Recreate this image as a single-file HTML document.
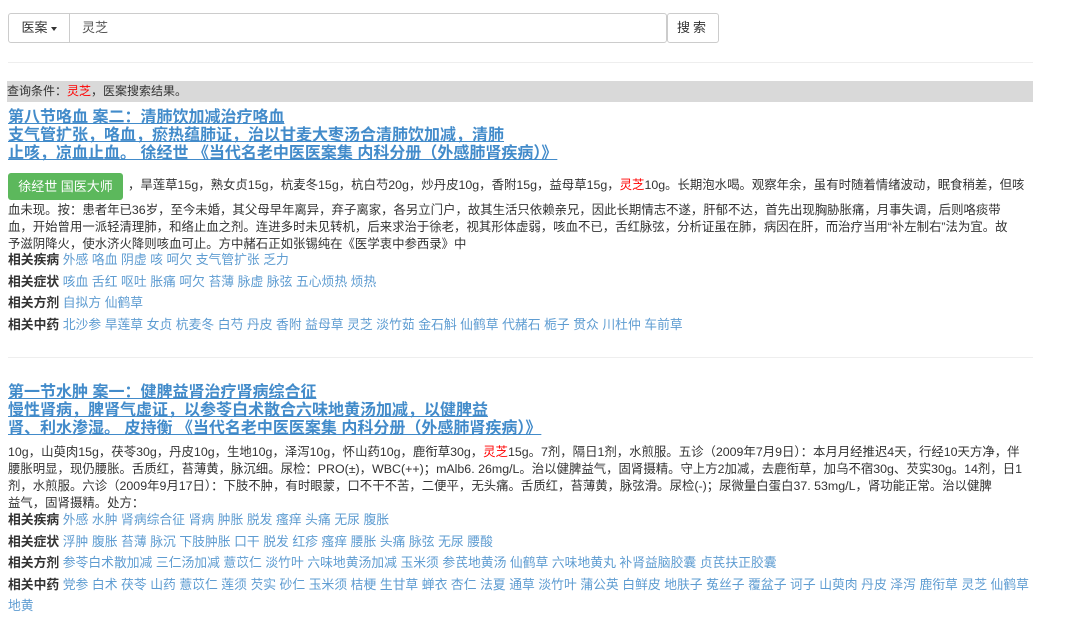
<!DOCTYPE html>
<html><head><meta charset="utf-8"><style>
body{margin:0;background:#fff;font-family:"Liberation Sans","Noto Sans CJK SC",sans-serif;color:#333;font-size:12px}
.sg{position:absolute;left:8px;top:13px;height:30px;display:flex}
.dd{width:60px;height:28px;border:1px solid #ccc;border-radius:3px 0 0 3px;font-size:13px;line-height:28px;text-align:center;box-sizing:content-box}
.dd:after{content:"";display:inline-block;border-top:4px solid #333;border-left:3px solid transparent;border-right:3px solid transparent;margin-left:3px;vertical-align:middle}
.inp{width:584px;height:28px;border:1px solid #ccc;border-radius:0 3px 3px 0;margin-left:-1px;font-size:13px;line-height:28px;padding-left:12px;color:#555}
.btn{position:absolute;left:667px;top:13px;width:50px;height:28px;border:1px solid #ccc;border-radius:3px;font-size:13px;line-height:28px;text-align:center;letter-spacing:3px}
hr{position:absolute;left:8px;width:1025px;border:0;border-top:1px solid #eee;margin:0}
.bar{position:absolute;left:7px;top:81px;width:1026px;height:21px;background:#d9d9d9;line-height:21px;font-size:12px}
.r{color:#f00}
.t{position:absolute;left:8px;font-size:16px;font-weight:bold;line-height:18px;color:#428bca;text-decoration:underline;white-space:nowrap}
.l{position:absolute;left:8px;white-space:nowrap;line-height:17px;font-size:12.4px}
.g{position:absolute;left:8px;width:115px;height:27px;background:#5cb85c;border-radius:3px;color:#fff;font-size:13px;line-height:27px;text-align:center}
.k{position:absolute;left:8px;white-space:nowrap;font-size:12.8px;line-height:18px}
.k b{color:#333}
.k span{color:#428bca;opacity:.85}
</style></head><body>
<div class="sg"><div class="dd">医案</div><div class="inp">灵芝</div></div>
<div class="btn">搜索</div>
<hr style="top:62px">
<div class="bar">查询条件：<span class="r">灵芝</span>，医案搜索结果。</div>

<div class="t" style="top:109px">第八节咯血 案二：清肺饮加减治疗咯血<br>支气管扩张，咯血，瘀热蕴肺证，治以甘麦大枣汤合清肺饮加减，清肺<br>止咳，凉血止血。 徐经世 《当代名老中医医案集 内科分册（外感肺肾疾病）》</div>
<div class="g" style="top:173px">徐经世 国医大师</div>
<div class="l" style="top:177px;left:128px">，旱莲草15g，熟女贞15g，杭麦冬15g，杭白芍20g，炒丹皮10g，香附15g，益母草15g，<span class="r">灵芝</span>10g。长期泡水喝。观察年余，虽有时随着情绪波动，眠食稍差，但咳</div>
<div class="l" style="top:202px">血未现。按：患者年已36岁，至今未婚，其父母早年离异，弃子离家，各另立门户，故其生活只依赖亲兄，因此长期情志不遂，肝郁不达，首先出现胸胁胀痛，月事失调，后则咯痰带</div>
<div class="l" style="top:219px">血，开始曾用一派轻清理肺，和络止血之剂。连进多时未见转机，后来求治于徐老，视其形体虚弱，咳血不已，舌红脉弦，分析证虽在肺，病因在肝，而治疗当用“补左制右”法为宜。故</div>
<div class="l" style="top:236px">予滋阴降火，使水济火降则咳血可止。方中赭石正如张锡纯在《医学衷中参西录》中</div>
<div class="k" style="top:251px"><b>相关疾病</b> <span>外感 咯血 阴虚 咳 呵欠 支气管扩张 乏力</span></div>
<div class="k" style="top:273px"><b>相关症状</b> <span>咳血 舌红 呕吐 胀痛 呵欠 苔薄 脉虚 脉弦 五心烦热 烦热</span></div>
<div class="k" style="top:294px"><b>相关方剂</b> <span>自拟方 仙鹤草</span></div>
<div class="k" style="top:316px"><b>相关中药</b> <span>北沙参 旱莲草 女贞 杭麦冬 白芍 丹皮 香附 益母草 灵芝 淡竹茹 金石斛 仙鹤草 代赭石 栀子 贯众 川杜仲 车前草</span></div>
<hr style="top:357px">

<div class="t" style="top:384px">第一节水肿 案一：健脾益肾治疗肾病综合征<br>慢性肾病，脾肾气虚证，以参苓白术散合六味地黄汤加减，以健脾益<br>肾、利水渗湿。 皮持衡 《当代名老中医医案集 内科分册（外感肺肾疾病）》</div>
<div class="l" style="top:444px">10g，山萸肉15g，茯苓30g，丹皮10g，生地10g，泽泻10g，怀山药10g，鹿衔草30g，<span class="r">灵芝</span>15g。7剂，隔日1剂，水煎服。五诊（2009年7月9日）：本月月经推迟4天，行经10天方净，伴</div>
<div class="l" style="top:461px">腰胀明显，现仍腰胀。舌质红，苔薄黄，脉沉细。尿检：PRO(±)，WBC(++)；mAlb6. 26mg/L。治以健脾益气，固肾摄精。守上方2加减，去鹿衔草，加乌不宿30g、芡实30g。14剂，日1</div>
<div class="l" style="top:478px">剂，水煎服。六诊（2009年9月17日）：下肢不肿，有时眼蒙，口不干不苦，二便平，无头痛。舌质红，苔薄黄，脉弦滑。尿检(-)；尿微量白蛋白37. 53mg/L，肾功能正常。治以健脾</div>
<div class="l" style="top:495px">益气，固肾摄精。处方：</div>
<div class="k" style="top:511px"><b>相关疾病</b> <span>外感 水肿 肾病综合征 肾病 肿胀 脱发 瘙痒 头痛 无尿 腹胀</span></div>
<div class="k" style="top:533px"><b>相关症状</b> <span>浮肿 腹胀 苔薄 脉沉 下肢肿胀 口干 脱发 红疹 瘙痒 腰胀 头痛 脉弦 无尿 腰酸</span></div>
<div class="k" style="top:554px"><b>相关方剂</b> <span>参苓白术散加减 三仁汤加减 薏苡仁 淡竹叶 六味地黄汤加减 玉米须 参芪地黄汤 仙鹤草 六味地黄丸 补肾益脑胶囊 贞芪扶正胶囊</span></div>
<div class="k" style="top:576px"><b>相关中药</b> <span>党参 白术 茯苓 山药 薏苡仁 莲须 芡实 砂仁 玉米须 桔梗 生甘草 蝉衣 杏仁 法夏 通草 淡竹叶 蒲公英 白鲜皮 地肤子 菟丝子 覆盆子 诃子 山萸肉 丹皮 泽泻 鹿衔草 灵芝 仙鹤草</span></div>
<div class="k" style="top:597px"><span>地黄</span></div>
</body></html>
